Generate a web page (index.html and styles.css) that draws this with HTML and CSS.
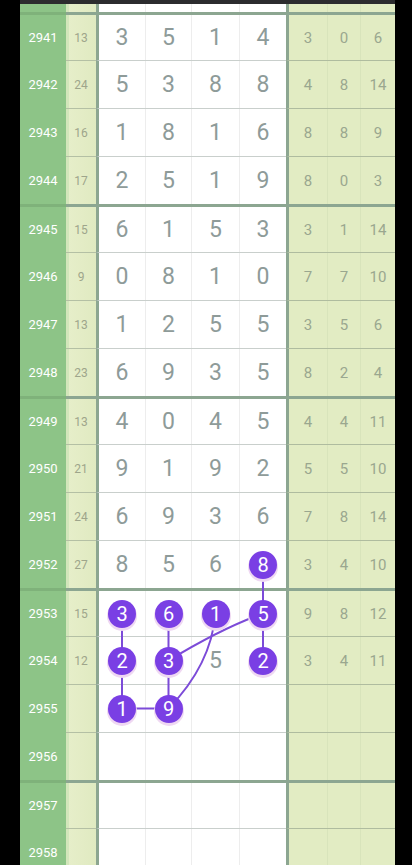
FILE: index.html
```html
<!DOCTYPE html>
<html lang="en">
<head>
  <meta charset="UTF-8">
  <title>Trend Chart</title>
  <link rel="stylesheet" href="styles.css">
</head>
<body>

  <div class="board">
    <div class="topbar"></div>

    <div class="row stub">
      <div class="c-no"></div>
      <div class="c-sum"></div>
      <div class="c-nums"><span></span><span></span><span></span><span></span></div>
      <div class="c-dist"><span></span><span></span><span></span></div>
    </div>

    <!-- group 1 -->
    <div class="row first">
      <div class="c-no">2941</div>
      <div class="c-sum">13</div>
      <div class="c-nums"><span>3</span><span>5</span><span>1</span><span>4</span></div>
      <div class="c-dist"><span>3</span><span>0</span><span>6</span></div>
    </div>
    <div class="row">
      <div class="c-no">2942</div>
      <div class="c-sum">24</div>
      <div class="c-nums"><span>5</span><span>3</span><span>8</span><span>8</span></div>
      <div class="c-dist"><span>4</span><span>8</span><span>14</span></div>
    </div>
    <div class="row">
      <div class="c-no">2943</div>
      <div class="c-sum">16</div>
      <div class="c-nums"><span>1</span><span>8</span><span>1</span><span>6</span></div>
      <div class="c-dist"><span>8</span><span>8</span><span>9</span></div>
    </div>
    <div class="row">
      <div class="c-no">2944</div>
      <div class="c-sum">17</div>
      <div class="c-nums"><span>2</span><span>5</span><span>1</span><span>9</span></div>
      <div class="c-dist"><span>8</span><span>0</span><span>3</span></div>
    </div>

    <!-- group 2 -->
    <div class="row first">
      <div class="c-no">2945</div>
      <div class="c-sum">15</div>
      <div class="c-nums"><span>6</span><span>1</span><span>5</span><span>3</span></div>
      <div class="c-dist"><span>3</span><span>1</span><span>14</span></div>
    </div>
    <div class="row">
      <div class="c-no">2946</div>
      <div class="c-sum">9</div>
      <div class="c-nums"><span>0</span><span>8</span><span>1</span><span>0</span></div>
      <div class="c-dist"><span>7</span><span>7</span><span>10</span></div>
    </div>
    <div class="row">
      <div class="c-no">2947</div>
      <div class="c-sum">13</div>
      <div class="c-nums"><span>1</span><span>2</span><span>5</span><span>5</span></div>
      <div class="c-dist"><span>3</span><span>5</span><span>6</span></div>
    </div>
    <div class="row">
      <div class="c-no">2948</div>
      <div class="c-sum">23</div>
      <div class="c-nums"><span>6</span><span>9</span><span>3</span><span>5</span></div>
      <div class="c-dist"><span>8</span><span>2</span><span>4</span></div>
    </div>

    <!-- group 3 -->
    <div class="row first">
      <div class="c-no">2949</div>
      <div class="c-sum">13</div>
      <div class="c-nums"><span>4</span><span>0</span><span>4</span><span>5</span></div>
      <div class="c-dist"><span>4</span><span>4</span><span>11</span></div>
    </div>
    <div class="row">
      <div class="c-no">2950</div>
      <div class="c-sum">21</div>
      <div class="c-nums"><span>9</span><span>1</span><span>9</span><span>2</span></div>
      <div class="c-dist"><span>5</span><span>5</span><span>10</span></div>
    </div>
    <div class="row">
      <div class="c-no">2951</div>
      <div class="c-sum">24</div>
      <div class="c-nums"><span>6</span><span>9</span><span>3</span><span>6</span></div>
      <div class="c-dist"><span>7</span><span>8</span><span>14</span></div>
    </div>
    <div class="row">
      <div class="c-no">2952</div>
      <div class="c-sum">27</div>
      <div class="c-nums"><span>8</span><span>5</span><span>6</span><span><b class="ball">8</b></span></div>
      <div class="c-dist"><span>3</span><span>4</span><span>10</span></div>
    </div>

    <!-- group 4 -->
    <div class="row first">
      <div class="c-no">2953</div>
      <div class="c-sum">15</div>
      <div class="c-nums"><span><b class="ball">3</b></span><span><b class="ball">6</b></span><span><b class="ball">1</b></span><span><b class="ball">5</b></span></div>
      <div class="c-dist"><span>9</span><span>8</span><span>12</span></div>
    </div>
    <div class="row">
      <div class="c-no">2954</div>
      <div class="c-sum">12</div>
      <div class="c-nums"><span><b class="ball">2</b></span><span><b class="ball">3</b></span><span>5</span><span><b class="ball">2</b></span></div>
      <div class="c-dist"><span>3</span><span>4</span><span>11</span></div>
    </div>
    <div class="row">
      <div class="c-no">2955</div>
      <div class="c-sum"></div>
      <div class="c-nums"><span><b class="ball">1</b></span><span><b class="ball">9</b></span><span></span><span></span></div>
      <div class="c-dist"><span></span><span></span><span></span></div>
    </div>
    <div class="row">
      <div class="c-no">2956</div>
      <div class="c-sum"></div>
      <div class="c-nums"><span></span><span></span><span></span><span></span></div>
      <div class="c-dist"><span></span><span></span><span></span></div>
    </div>

    <!-- group 5 -->
    <div class="row first">
      <div class="c-no">2957</div>
      <div class="c-sum"></div>
      <div class="c-nums"><span></span><span></span><span></span><span></span></div>
      <div class="c-dist"><span></span><span></span><span></span></div>
    </div>
    <div class="row">
      <div class="c-no">2958</div>
      <div class="c-sum"></div>
      <div class="c-nums"><span></span><span></span><span></span><span></span></div>
      <div class="c-dist"><span></span><span></span><span></span></div>
    </div>

    <!-- trend lines drawn under the balls -->
    <svg class="links" width="375" height="865" viewBox="0 0 375 865">
      <g fill="none" stroke="#7c4bd8" stroke-width="2" stroke-linecap="round">
        <path d="M243 564.5 L243 660.5" />
        <path d="M102 613.5 L102 708.5 L148.5 708.5" />
        <path d="M148.5 613.5 L148.5 708.5" />
        <path d="M195.5 613.5 Q191 665 148.5 708.5" />
        <path d="M243 613.5 Q202 628 148.5 660.5" />
      </g>
    </svg>
  </div>

</body>
</html>
```

FILE: styles.css
```css
body {
  margin: 0;
  background: #000;
  font-family: Roboto, 'Noto Sans', sans-serif;
  height: 865px;
  overflow: hidden;
}

.board {
  position: relative;
  width: 375px;
  margin-left: 20px;
}

.topbar {
  height: 4px;
  background: #2c2c2e;
}

.row {
  display: grid;
  grid-template-columns: 46px 30px 190px 109px;
  height: 48px;
}

.row.stub {
  height: 8px;
}

.row > div {
  box-sizing: border-box;
  border-top: 1px solid transparent;
}

.row.stub > div {
  border-top: none;
}

.c-no {
  background: #8dc487;
  color: #fff;
  font-size: 13px;
  display: flex;
  align-items: center;
  justify-content: center;
}

.c-sum {
  background: linear-gradient(to right, #d3e6bb 0, #d3e6bb 3px, #e6eec9 3px, #e0eac1 100%);
  color: #9ea58b;
  font-size: 12px;
  display: flex;
  align-items: center;
  justify-content: center;
}

.row > .c-sum {
  border-top-color: #b4c0a4;
}

.c-nums {
  background: #fff;
  border-left: 3px solid #8ca691;
  display: grid;
  grid-template-columns: 46px 46px 48px 47px;
}

.row > .c-nums {
  border-top-color: #c9cfcc;
}

.c-nums span {
  display: flex;
  align-items: center;
  justify-content: center;
  color: #8e9b99;
  font-size: 23px;
}

.c-nums span + span {
  border-left: 1px solid #ededed;
}

.c-dist {
  background: #e2ecc3;
  border-left: 3px solid #8ca691;
  display: grid;
  grid-template-columns: 38px 33px 35px;
}

.row > .c-dist {
  border-top-color: #afbc9f;
}

.c-dist span {
  display: flex;
  align-items: center;
  justify-content: center;
  color: #9aa78f;
  font-size: 15px;
}

.c-dist span + span {
  border-left: 1px solid #d8e4bb;
}

/* first row of each group of four gets the heavy rule */
.row.first > div {
  border-top: 3px solid #8ca691;
}

.row.first > .c-no {
  border-top-color: #7fb27a;
}

.ball {
  position: relative;
  z-index: 2;
  width: 28px;
  height: 28px;
  border-radius: 50%;
  background: #7a3fe4;
  color: #fff;
  font-weight: 400;
  font-size: 20px;
  display: flex;
  align-items: center;
  justify-content: center;
  box-shadow: 0 2px 0 1px #efd8f2;
}

.links {
  position: absolute;
  left: 0;
  top: 0;
  z-index: 1;
  pointer-events: none;
}
```
